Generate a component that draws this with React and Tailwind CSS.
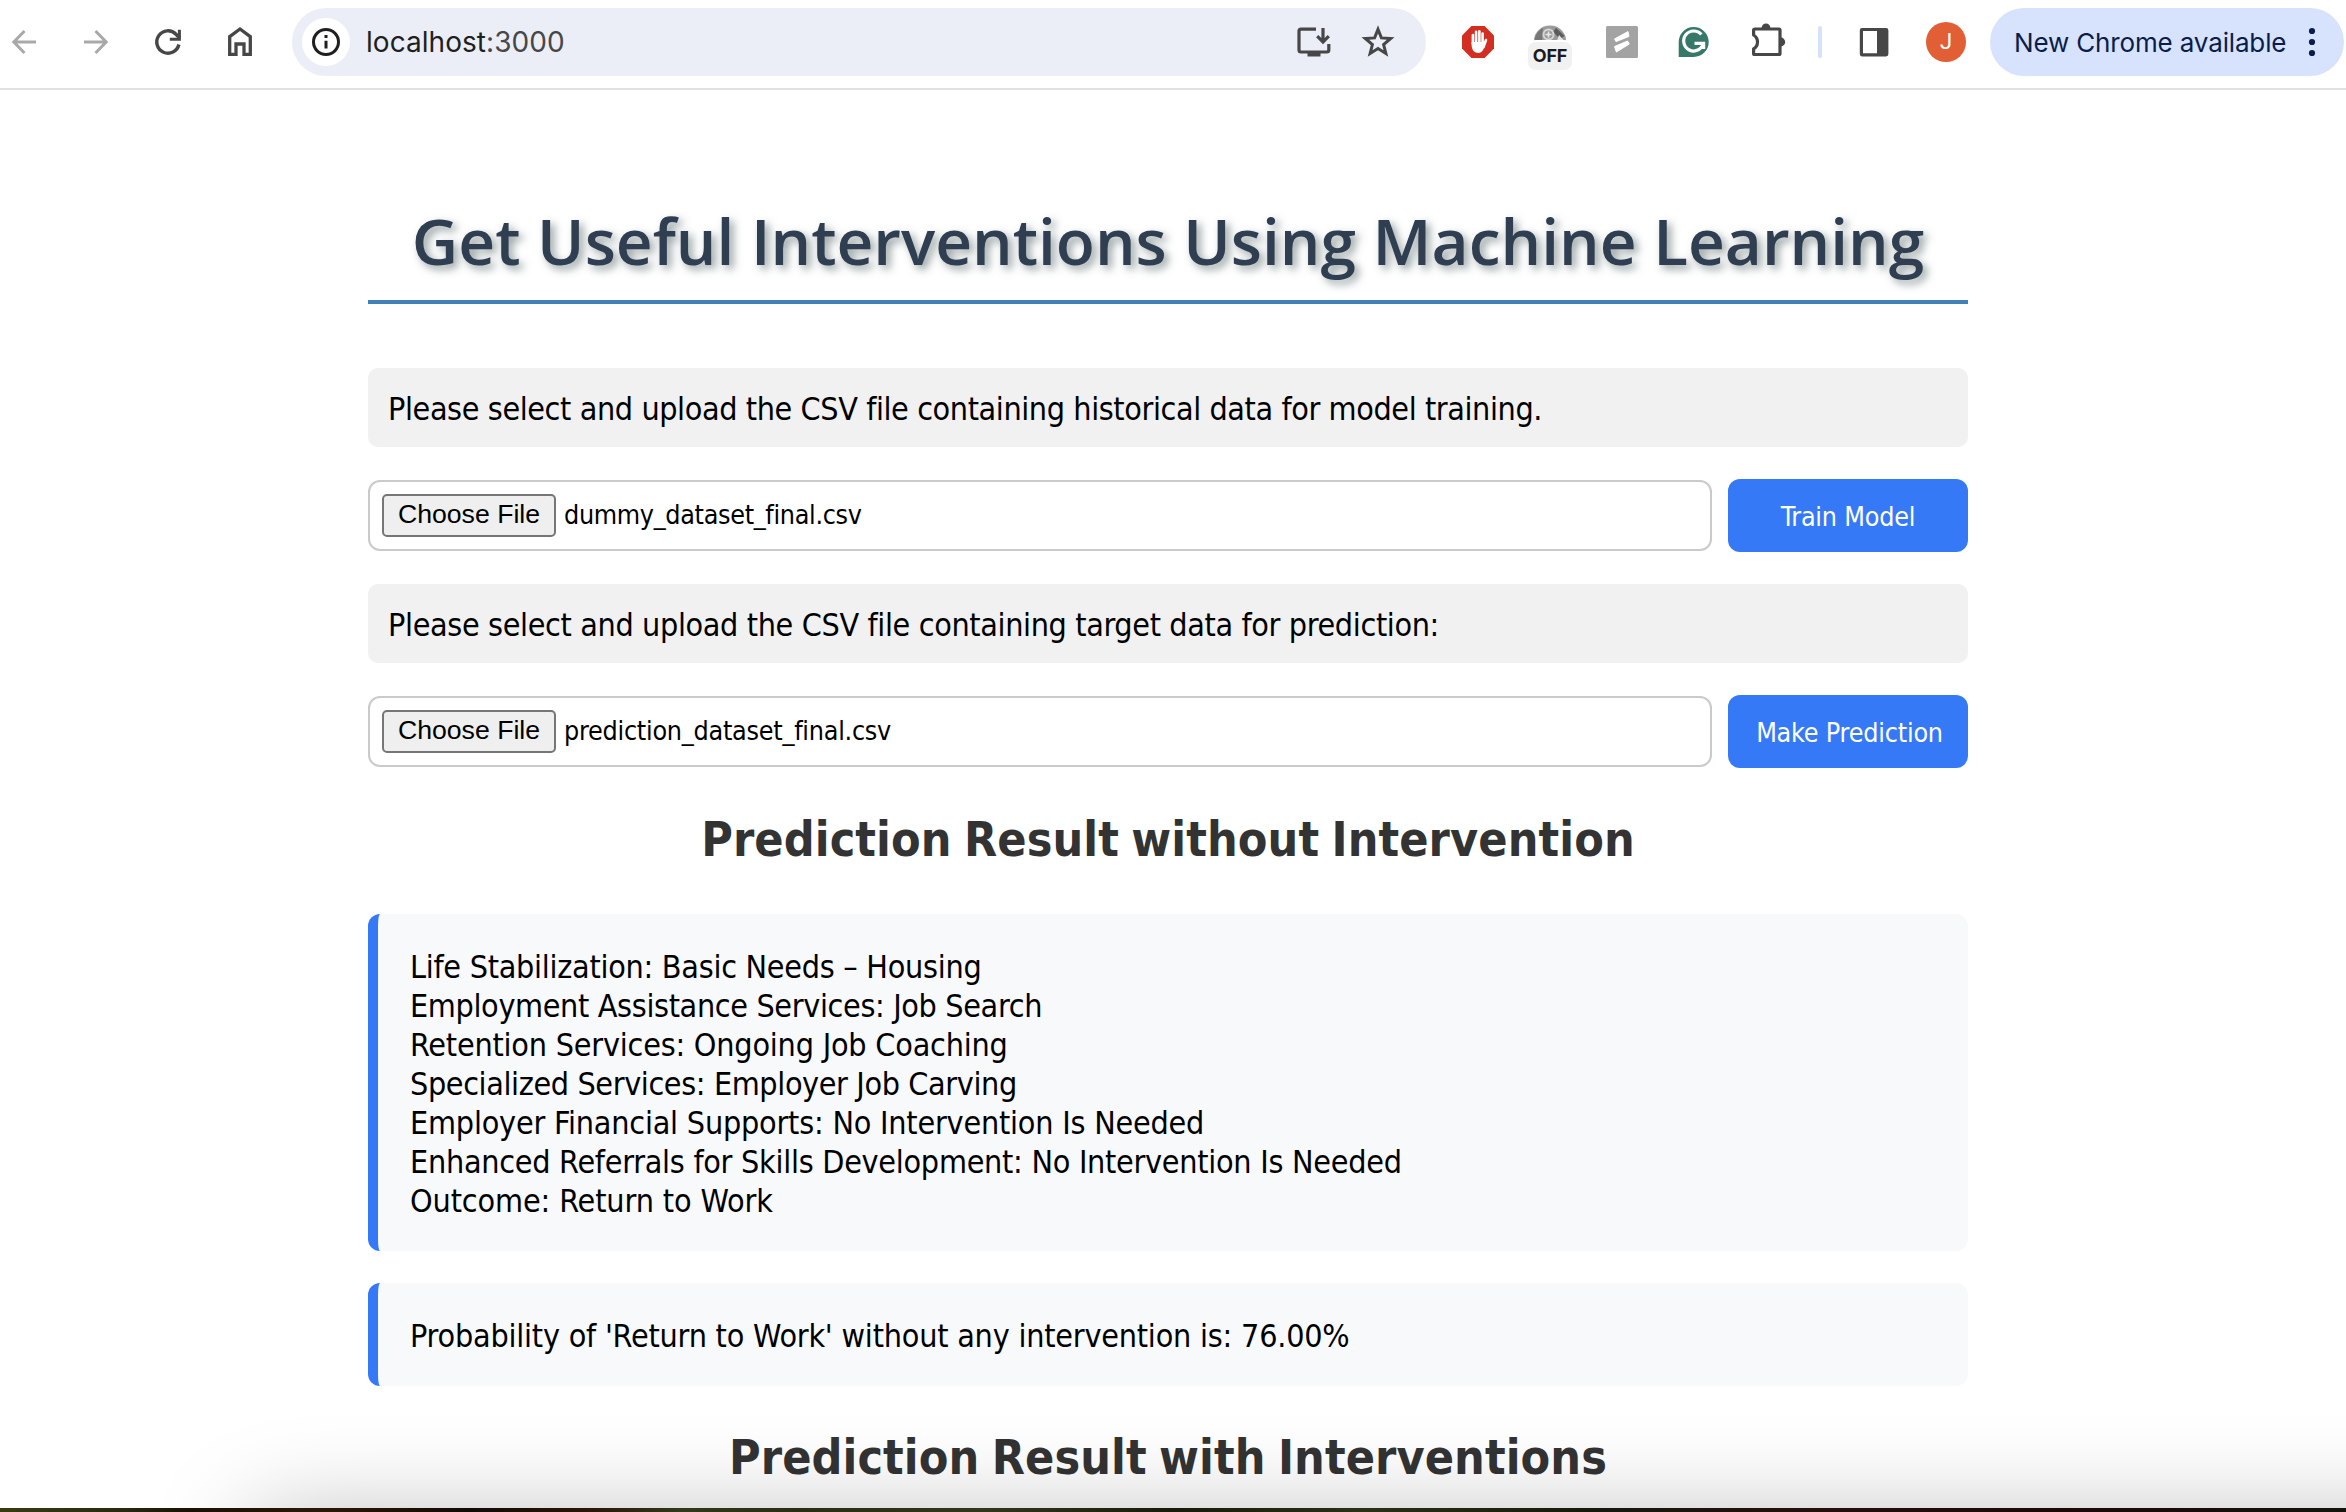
import React from "react";

const TAHOMA = "font-['DejaVu_Sans_Condensed','DejaVu_Sans',sans-serif]";

function Icon({ children, className = "" }) {
  return (
    <svg viewBox="0 0 48 48" className={`h-12 w-12 shrink-0 ${className}`} fill="none" stroke="currentColor">
      {children}
    </svg>
  );
}

function Toolbar() {
  return (
    <header className="flex h-[90px] shrink-0 items-center border-b-2 border-[#e1e1e1] bg-white pb-1 text-[#474747]">
      <nav className="flex gap-6">
        <Icon className="text-[#a9a9a9]">
          <path strokeWidth="3" d="M36 24H14M24.5 13L13.8 24L24.5 35" />
        </Icon>
        <Icon className="text-[#a9a9a9]">
          <path strokeWidth="3" d="M12 24H34M23.5 13L34.2 24L23.5 35" />
        </Icon>
        <Icon>
          <path strokeWidth="3.4" d="M34.9 26.5A11.2 11.2 0 1 1 32 16.2L35.6 20" />
          <path strokeWidth="3" d="M35.4 11.8V21.2H25.8" />
        </Icon>
        <Icon>
          <path strokeWidth="3.3" d="M13.7 18.6L24 11L34.3 18.6V36.3H28V26H20V36.3H13.7Z" />
        </Icon>
      </nav>

      <div className="ml-7 flex h-[68px] w-[1134px] shrink-0 items-center rounded-full bg-[#ebeef7] pl-[10px] pr-6">
        <span className="flex h-12 w-12 items-center justify-center rounded-full bg-white text-[#1f1f1f]">
          <Icon>
            <circle cx="24" cy="24" r="12.5" strokeWidth="3" />
            <path strokeWidth="3" d="M24 22.7V30.5M24 17V20" />
          </Icon>
        </span>
        <span className="ml-4 font-[Inter,sans-serif] text-[28px] leading-[34px] tracking-[0.05px] text-[#1f1f1f]">
          localhost<span className="text-[#474747]">:3000</span>
        </span>
        <div className="ml-auto flex gap-4">
          <Icon>
            <path strokeWidth="3.2" d="M26 11.2H11Q9 11.2 9 13.2V32Q9 34 11 34H36.8Q38.8 34 38.8 32V26" />
            <path strokeWidth="3.2" d="M33 10V24M27.2 18.2L33 24L38.8 18.2" />
            <rect x="17.5" y="34.5" width="13" height="4" fill="currentColor" stroke="none" />
          </Icon>
          <Icon>
            <path
              strokeWidth="3"
              strokeMiterlimit="10"
              d="M24 11.4L27.4 19.9L36.7 20.5L29.6 26.5L31.9 35.5L24 30.6L16.1 35.5L18.4 26.5L11.3 20.5L20.6 19.9Z"
            />
          </Icon>
        </div>
      </div>

      <div className="ml-7 flex gap-6">
        <Icon>
          <path d="M17.4 8H30.6L40 17.4V30.6L30.6 40H17.4L8 30.6V17.4Z" fill="#d22f22" stroke="none" />
          <g stroke="#fff" strokeLinecap="round" strokeWidth="2.6">
            <path d="M18.9 17V26M22.1 13.8V26M25.4 13.4V26M28.6 15.6V26" />
            <path d="M32 22L29.5 29" />
          </g>
          <path d="M17.6 24H29.9L31 26.5C30 31 28 35 24.5 35C20.5 35 17.6 32 17.6 27Z" fill="#fff" stroke="none" />
        </Icon>
        <div className="relative h-12 w-12">
          <Icon>
            <path d="M8 22.5A16 15 0 0 1 40 22.5Z" fill="#9a9a9a" stroke="none" />
            <path d="M9 20A16 16 0 0 1 17 10L16 22H9Z" fill="#777" stroke="none" />
            <path d="M30 9.8L38.5 18L34 21L27 14Z" fill="#5c5c5c" stroke="none" />
            <path d="M31 22.5L33 17L38 22.5Z" fill="#e4e4e4" stroke="none" />
            <circle cx="22.5" cy="16.5" r="5" stroke="#d6d6d6" strokeWidth="2" />
            <path d="M22.5 13.5V19.5M19.5 16.5H25.5" stroke="#e8e8e8" strokeWidth="1.6" />
          </Icon>
          <span className="absolute left-0.5 top-6 flex h-7 w-11 items-center justify-center rounded-lg bg-[#f1f1f2] font-[Inter,sans-serif] text-[18px] font-bold leading-none tracking-[-0.2px] text-[#1b1b1f] ring-2 ring-white">
            OFF
          </span>
        </div>
        <Icon>
          <rect x="8" y="8" width="32" height="32" rx="1.5" fill="#a3a3a3" stroke="none" />
          <path d="M16.5 21L30 13.6L31 18.4L18 23.6Z" fill="#fff" stroke="#fff" strokeWidth="1" strokeLinejoin="round" />
          <path d="M16.5 28.6L29.6 23L31.3 26L18.4 34Z" fill="#fff" stroke="#fff" strokeWidth="1" strokeLinejoin="round" />
        </Icon>
        <Icon>
          <path d="M8.7 39V24A15 15 0 1 1 23.7 39Z" fill="#36786a" stroke="none" />
          <path stroke="#fff" strokeWidth="3.2" d="M31.4 16.6A10 10 0 1 0 33.4 25.4" />
          <path stroke="#fff" strokeWidth="3.2" d="M24.5 25.4H33.6V31" />
        </Icon>
        <Icon>
          <path
            strokeWidth="3.2"
            strokeLinejoin="round"
            d="M13 11H37Q38 11 38 12V35.5Q38 36.5 37 36.5H12.5Q11.6 36.5 11.6 35.5V30.8Q15.5 28.5 15.5 24Q15.5 19.5 11.6 17V12Q11.6 11 13 11Z"
          />
          <path d="M19.6 10A4.4 4.6 0 0 1 28.4 10ZM39 19.6A4.2 4.4 0 0 1 39 28.4Z" fill="currentColor" stroke="none" />
        </Icon>
      </div>

      <span className="ml-7 h-8 w-1 shrink-0 rounded-sm bg-[#d6e1fc]" />

      <div className="ml-7 flex gap-6">
        <Icon>
          <path
            d="M12 10H36Q38.4 10 38.4 12.4V36Q38.4 38.4 36 38.4H12Q9.8 38.4 9.8 36V12.4Q9.8 10 12 10ZM13 13V35.2H27V13Z"
            fill="currentColor"
            fillRule="evenodd"
            stroke="none"
          />
        </Icon>
        <span className="flex h-12 w-12 items-center justify-center">
          <span className="flex h-10 w-10 items-center justify-center rounded-full bg-[#e25f35] font-[Roboto,sans-serif] text-[22px] leading-none text-white">
            J
          </span>
        </span>
      </div>

      <div className="ml-5 flex h-[68px] w-[354px] shrink-0 items-center rounded-full bg-[#d7e2fc] pl-6 text-[#0a1d4a]">
        <span className="whitespace-nowrap pt-0.5 font-[Inter,sans-serif] text-[26px] leading-8 tracking-[-0.15px]">
          New Chrome available
        </span>
        <Icon className="ml-auto mr-2">
          <g fill="currentColor" stroke="none">
            <circle cx="24" cy="13" r="3.1" />
            <circle cx="24" cy="24" r="3.1" />
            <circle cx="24" cy="35" r="3.1" />
          </g>
        </Icon>
      </div>
    </header>
  );
}

function Note({ children, className }) {
  return (
    <p className={`rounded-[10px] bg-[#f1f1f1] px-5 pb-[18px] pt-[22px] text-[32px] leading-[39px] ${className}`}>
      {children}
    </p>
  );
}

function UploadRow({ file, fileClass, action, actionClass = "" }) {
  return (
    <div className="my-8 flex h-[73px] items-center gap-4">
      <div className="flex h-[71px] w-[1344px] items-center gap-2 rounded-xl border-2 border-[#cacaca] pl-3">
        <button className="h-[43px] w-[174px] rounded-[5px] border-2 border-[#767676] bg-[#efefef] pb-0.5 font-['Liberation_Sans',sans-serif] text-[26.67px] leading-[37px]">
          Choose File
        </button>
        <span className={`pb-0.5 text-[26.67px] leading-8 ${fileClass}`}>{file}</span>
      </div>
      <button
        className={`h-[73px] w-60 whitespace-nowrap rounded-xl bg-[#3579f7] pt-0.5 text-[26.67px] tracking-[-0.2px] text-white ${actionClass}`}
      >
        {action}
      </button>
    </div>
  );
}

function SectionTitle({ children, className = "" }) {
  return (
    <h2
      className={`-mt-8 pt-[42px] text-center text-[48px] font-bold leading-[58px] tracking-[0.1px] text-[#333] [word-spacing:-2.8px] ${className}`}
    >
      {children}
    </h2>
  );
}

function ResultCard({ lines }) {
  return (
    <div className="mb-8 rounded-xl border-l-[10px] border-[#3579f7] bg-[#f8f9fb] pb-[30px] pl-8 pt-[34px] text-[32px] leading-[39px]">
      {lines.map(([line, tracking]) => (
        <p key={line} className={tracking}>
          {line}
        </p>
      ))}
    </div>
  );
}

const RESULTS = [
  ["Life Stabilization: Basic Needs – Housing", "tracking-[-0.27px]"],
  ["Employment Assistance Services: Job Search", "tracking-[-0.35px]"],
  ["Retention Services: Ongoing Job Coaching", "tracking-[-0.21px]"],
  ["Specialized Services: Employer Job Carving", "tracking-[-0.38px]"],
  ["Employer Financial Supports: No Intervention Is Needed", "tracking-[-0.21px]"],
  ["Enhanced Referrals for Skills Development: No Intervention Is Needed", "tracking-[-0.27px]"],
  ["Outcome: Return to Work", "tracking-[-0.12px]"],
];

const PROBABILITY = [
  ["Probability of 'Return to Work' without any intervention is: 76.00%", "tracking-[-0.21px]"],
];

export default function App() {
  return (
    <div className="relative flex h-[1512px] w-[2346px] flex-col overflow-hidden bg-white">
      <Toolbar />
      <main className={`ml-[368px] h-[1418px] w-[1600px] text-black ${TAHOMA}`}>
        <h1 className="mb-16 border-b-4 border-[#4280b8] pb-4 pt-[107px] text-center font-['Open_Sans',sans-serif] text-[64px] font-semibold leading-[87px] text-[#2f3e50] [text-shadow:4px_4px_8px_rgb(127_140_141_/_0.85)]">
          Get Useful Interventions Using Machine Learning
        </h1>
        <Note className="tracking-[-0.4px]">
          Please select and upload the CSV file containing historical data for model training.
        </Note>
        <UploadRow file="dummy_dataset_final.csv" fileClass="tracking-[-0.33px]" action="Train Model" />
        <Note className="tracking-[-0.36px]">
          Please select and upload the CSV file containing target data for prediction:
        </Note>
        <UploadRow
          file="prediction_dataset_final.csv"
          fileClass="tracking-[-0.25px]"
          action="Make Prediction"
          actionClass="pl-[9px] pr-1.5"
        />
        <SectionTitle className="mb-[46px]">Prediction Result without Intervention</SectionTitle>
        <ResultCard lines={RESULTS} />
        <ResultCard lines={PROBABILITY} />
        <SectionTitle>Prediction Result with Interventions</SectionTitle>
      </main>
      <div className="pointer-events-none absolute inset-x-0 top-[1300px] h-[208px] overflow-hidden">
        <div className="ml-[250px] mt-[220px] h-[600px] w-[2400px] rounded-[20px] shadow-[0_0_100px_rgb(0_0_0_/_0.28)]" />
      </div>
      <div className="absolute inset-x-0 bottom-0 h-1 bg-[linear-gradient(90deg,#3a3b14_0%,#2a2a10_5%,#1a1206_8%,#2c1706_14%,#120b05_20%,#2b1507_25%,#33381a_29%,#2a2d12_34%,#33361a_42%,#191a0b_50%,#2c3015_58%,#16180b_68%,#260f0a_78%,#1b0906_88%,#1a0c0a_93%,#14140c_100%)]" />
    </div>
  );
}
